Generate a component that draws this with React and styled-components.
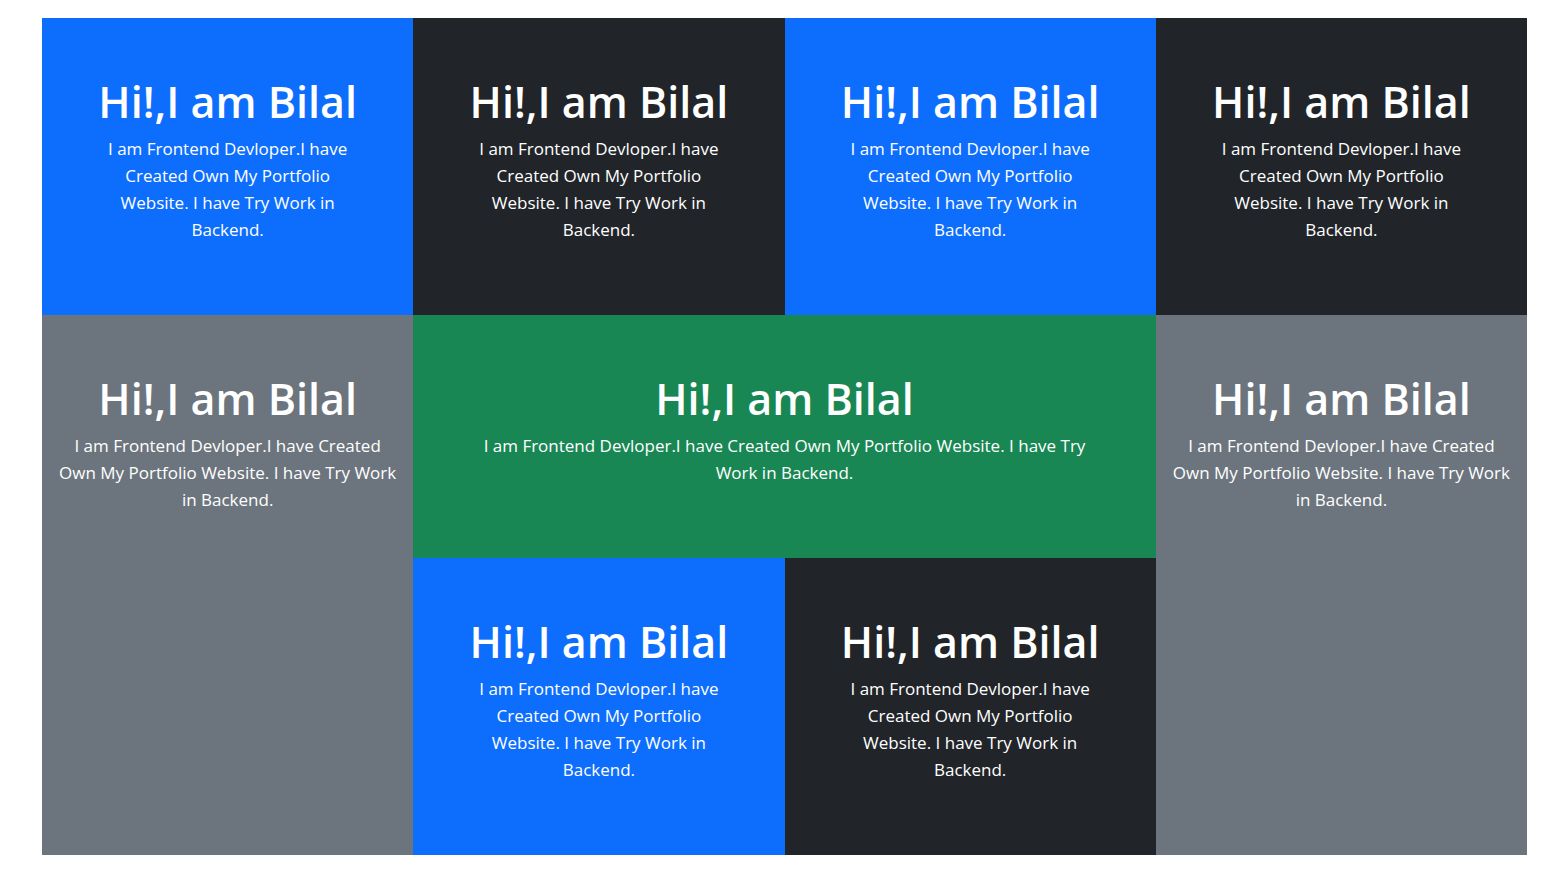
import styled, { createGlobalStyle } from 'styled-components';

const GlobalStyle = createGlobalStyle`
    body {
        margin: 0;
        background: #fff;
        font-family: "Open Sans", "Liberation Sans", sans-serif;
    }
`;

const COLORS = {
    primary: '#0d6efd',
    dark: '#212529',
    secondary: '#6c757d',
    success: '#198754',
};

const Page = styled.div`
    padding: 18px 36px 17px 42px;
`;

const Grid = styled.div`
    display: grid;
    grid-template-columns: repeat(4, 1fr);
    grid-template-areas:
        'a b c d'
        'e f f g'
        'e h i g';
`;

const Card = styled.section`
    grid-area: ${(props) => props.$area};
    background-color: ${(props) => COLORS[props.$color]};
    color: #fff;
    text-align: center;
    padding: 56px ${(props) => (props.$narrow ? '14px' : '48px')} 54px;
`;

const Title = styled.h1`
    margin: 0 0 6px;
    font-size: 43px;
    font-weight: 600;
    line-height: 55px;
`;

const Text = styled.p`
    margin: 0 0 18px;
    font-size: 17px;
    line-height: 27px;
`;

const cards = [
    { area: 'a', color: 'primary' },
    { area: 'b', color: 'dark' },
    { area: 'c', color: 'primary' },
    { area: 'd', color: 'dark' },
    { area: 'e', color: 'secondary', narrow: true },
    { area: 'f', color: 'success' },
    { area: 'g', color: 'secondary', narrow: true },
    { area: 'h', color: 'primary' },
    { area: 'i', color: 'dark' },
];

export default function App() {
    return (
        <>
            <GlobalStyle />
            <Page>
                <Grid>
                    {cards.map((c) => (
                        <Card key={c.area} $area={c.area} $color={c.color} $narrow={c.narrow}>
                            <Title>Hi!,I am Bilal</Title>
                            <Text>
                                I am Frontend Devloper.I have Created Own My Portfolio Website. I have
                                Try Work in Backend.
                            </Text>
                        </Card>
                    ))}
                </Grid>
            </Page>
        </>
    );
}
